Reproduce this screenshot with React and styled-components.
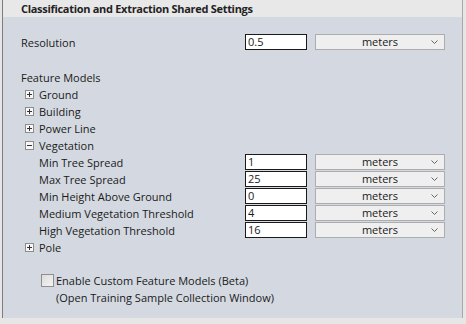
import React from 'react'
import styled, { createGlobalStyle } from 'styled-components'

const GlobalStyle = createGlobalStyle`
  html, body {
    margin: 0;
    padding: 0;
    background: #e9e9e9;
  }
  * {
    box-sizing: border-box;
  }
`

const Frame = styled.div`
  width: 466px;
  height: 324px;
  display: flex;
  flex-direction: column;
  padding: 0 3px 6px 2px;
  background: #e6e6e6;
  font-family: "Open Sans", "Noto Sans", sans-serif;
  font-size: 11px;
  color: #1a1a1a;
  overflow: hidden;
`

const Panel = styled.div`
  flex: 1;
  display: flex;
  flex-direction: column;
  border-left: 1px solid #7c7c7c;
  border-right: 1px solid #a8a8a8;
  background: #d4d9e1;
`

const Header = styled.div`
  height: 17px;
  display: flex;
  align-items: center;
  padding-left: 18px;
  background: #e8e8e8;
  font-weight: bold;
  letter-spacing: -0.3px;
  color: #222;
`

const Body = styled.div`
  padding: 17px 0 0 18px;
  display: flex;
  flex-direction: column;
`

const Row = styled.div`
  display: grid;
  grid-template-columns: 216px 62px 130px;
  column-gap: 8px;
  height: 17px;
  align-items: center;
  margin-top: ${p => p.$gap || 0}px;
`

const Label = styled.div`
  padding-left: ${p => p.$indent || 0}px;
  white-space: nowrap;
  display: flex;
  align-items: center;
`

const TextBox = styled.div`
  height: 16px;
  align-self: start;
  background: #fff;
  border: 1px solid #1a1a1a;
  padding-left: 2px;
  line-height: 14px;
`

const Select = styled.div`
  height: 16px;
  align-self: start;
  background: #efefef;
  border: 1px solid #adadad;
  display: flex;
  align-items: center;
  justify-content: center;
  position: relative;
  line-height: 14px;
`

const Chevron = styled.svg`
  position: absolute;
  right: 6px;
  top: 5px;
`

const Toggle = styled.span`
  width: 9px;
  height: 9px;
  border: 1px solid #8c8c8c;
  background: #f7f7f7;
  margin: 0 5px 0 4px;
  display: inline-flex;
  align-items: center;
  justify-content: center;
`

const CheckRow = styled.div`
  display: flex;
  align-items: center;
  height: 17px;
  padding-left: 20px;
  margin-top: ${p => p.$gap || 0}px;
`

const CheckBox = styled.span`
  width: 13px;
  height: 13px;
  border: 1px solid #8e8f8f;
  background: linear-gradient(135deg, #dcdcdc, #f4f4f4);
  margin-right: 2px;
`

const SubText = styled.div`
  height: 17px;
  display: flex;
  align-items: center;
  padding-left: 35px;
`

const Expander = ({ open }) => (
  <Toggle>
    <svg width="7" height="7" viewBox="0 0 7 7">
      <rect x="1" y="3" width="5" height="1" fill="#333" />
      {!open && <rect x="3" y="1" width="1" height="5" fill="#333" />}
    </svg>
  </Toggle>
)

const Units = () => (
  <Select>
    meters
    <Chevron width="7" height="5" viewBox="0 0 7 5">
      <path d="M0.5 0.5 L3.5 3.5 L6.5 0.5" fill="none" stroke="#666" strokeWidth="1" />
    </Chevron>
  </Select>
)

const vegetation = [
  ['Min Tree Spread', '1'],
  ['Max Tree Spread', '25'],
  ['Min Height Above Ground', '0'],
  ['Medium Vegetation Threshold', '4'],
  ['High Vegetation Threshold', '16'],
]

export default function App() {
  return (
    <Frame>
      <GlobalStyle />
      <Panel>
        <Header>Classification and Extraction Shared Settings</Header>
        <Body>
          <Row>
            <Label>Resolution</Label>
            <TextBox>0.5</TextBox>
            <Units />
          </Row>
          <Row $gap={18}>
            <Label>Feature Models</Label>
          </Row>
          <Row><Label><Expander />Ground</Label></Row>
          <Row><Label><Expander />Building</Label></Row>
          <Row><Label><Expander />Power Line</Label></Row>
          <Row><Label><Expander open />Vegetation</Label></Row>
          {vegetation.map(([name, value]) => (
            <Row key={name}>
              <Label $indent={18}>{name}</Label>
              <TextBox>{value}</TextBox>
              <Units />
            </Row>
          ))}
          <Row><Label><Expander />Pole</Label></Row>
          <CheckRow $gap={16}>
            <CheckBox />
            Enable Custom Feature Models (Beta)
          </CheckRow>
          <SubText>(Open Training Sample Collection Window)</SubText>
        </Body>
      </Panel>
    </Frame>
  )
}
